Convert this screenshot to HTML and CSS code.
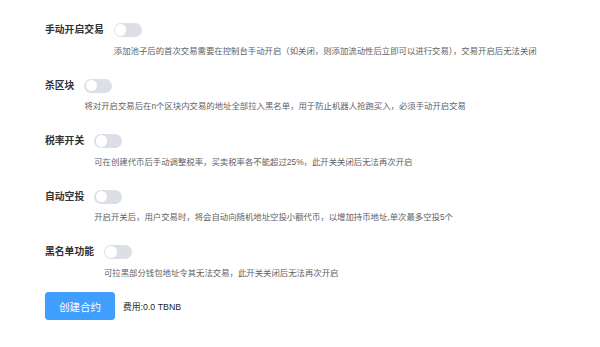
FILE: index.html
```html
<!DOCTYPE html>
<html lang="zh-CN">
<head>
<meta charset="utf-8">
<link rel="stylesheet" href="styles.css">
</head>
<body>
<div class="form">
  <div class="row">
    <div class="label">手动开启交易</div>
    <div class="content">
      <span class="switch"><span class="knob"></span></span>
      <div class="desc">添加池子后的首次交易需要在控制台手动开启（如关闭，则添加流动性后立即可以进行交易），交易开启后无法关闭</div>
    </div>
  </div>
  <div class="row">
    <div class="label">杀区块</div>
    <div class="content">
      <span class="switch"><span class="knob"></span></span>
      <div class="desc">将对开启交易后在n个区块内交易的地址全部拉入黑名单，用于防止机器人抢跑买入，必须手动开启交易</div>
    </div>
  </div>
  <div class="row">
    <div class="label">税率开关</div>
    <div class="content">
      <span class="switch"><span class="knob"></span></span>
      <div class="desc">可在创建代币后手动调整税率，买卖税率各不能超过25%，此开关关闭后无法再次开启</div>
    </div>
  </div>
  <div class="row">
    <div class="label">自动空投</div>
    <div class="content">
      <span class="switch"><span class="knob"></span></span>
      <div class="desc">开启开关后，用户交易时，将会自动向随机地址空投小额代币，以增加持币地址,单次最多空投5个</div>
    </div>
  </div>
  <div class="row">
    <div class="label">黑名单功能</div>
    <div class="content">
      <span class="switch"><span class="knob"></span></span>
      <div class="desc">可拉黑部分钱包地址令其无法交易，此开关关闭后无法再次开启</div>
    </div>
  </div>
  <div class="actions">
    <button class="btn">创建合约</button>
    <span class="fee">费用:0.0 TBNB</span>
  </div>
</div>
</body>
</html>
```
FILE: styles.css
```css
html, body {
  margin: 0;
  padding: 0;
  background: #ffffff;
}
body {
  font-family: "Liberation Sans", "Noto Sans CJK SC", sans-serif;
  width: 600px;
  height: 347px;
  overflow: hidden;
}
.form {
  padding: 23px 0 0 45px;
}
.row {
  display: flex;
  align-items: flex-start;
  height: 55.5px;
}
.label {
  font-size: 9.8px;
  line-height: 14px;
  font-weight: 700;
  color: #303133;
  margin-right: 10px;
  white-space: nowrap;
}
.content {
  display: flex;
  flex-direction: column;
  align-items: flex-start;
}
.switch {
  display: block;
  position: relative;
  width: 28px;
  height: 14px;
  border-radius: 7px;
  background: #dcdfe6;
}
.knob {
  position: absolute;
  top: 1.4px;
  left: 1.4px;
  width: 11.2px;
  height: 11.2px;
  border-radius: 50%;
  background: #ffffff;
}
.desc {
  margin-top: 7.5px;
  font-size: 8.4px;
  line-height: 12px;
  color: #606266;
  white-space: nowrap;
}
.actions {
  display: flex;
  align-items: center;
  margin-top: -8.5px;
}
.btn {
  width: 70px;
  height: 28px;
  border: 1px solid #409eff;
  border-radius: 3px;
  background: #409eff;
  color: #ffffff;
  font-family: inherit;
  font-size: 10.5px;
  padding: 0;
  margin: 0 8px 0 0;
}
.fee {
  font-size: 8.8px;
  color: #1f1f1f;
}
```
